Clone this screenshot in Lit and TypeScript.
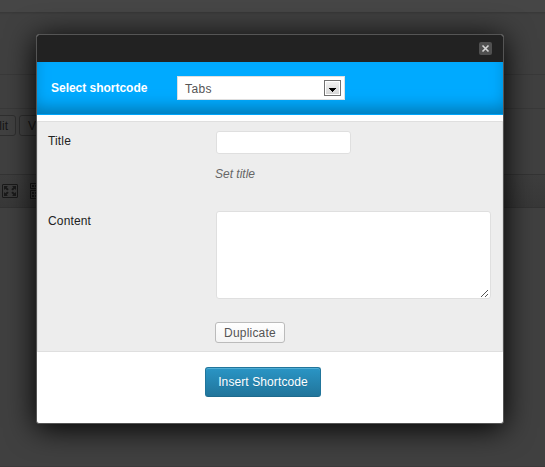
import { LitElement, html, css, svg } from "lit";
import { customElement } from "lit/decorators.js";

@customElement("editor-backdrop")
class EditorBackdrop extends LitElement {
  static styles = css`
    :host { display: flex; flex-direction: column; width: 545px; height: 467px; background: #404040; overflow: hidden; font: 12px "Liberation Sans", Arial, sans-serif; color: #151515; }
    div { box-sizing: border-box; flex: none; }
    .bar { height: 13px; background: #464646; border-bottom: 1px solid #393939; box-shadow: 0 1px 1px #3c3c3c; }
    .row1 { height: 62px; border-bottom: 1px solid #393939; }
    .row2 { height: 34px; border-bottom: 1px solid #393939; }
    .media { height: 66px; padding-top: 6px; display: flex; gap: 3px; border-bottom: 1px solid #343434; }
    .btn { height: 21px; line-height: 20px; border: 1px solid #2f2f2f; border-radius: 3px; background: #414141; white-space: nowrap; }
    .edit { width: 36px; margin-left: -20px; padding-right: 7px; text-align: right; }
    .visual { width: 60px; padding-left: 8px; }
    .tools { height: 33px; padding: 9px 0 0 2px; display: flex; gap: 12px; background: linear-gradient(#3e3e3e, #383838); border-bottom: 1px solid #333; }
    .canvas { height: 258px; }
    .foot { height: 1px; background: #3c393a; }
    svg { display: block; flex: none; }
    .kitchen { margin-top: -1px; }
  `;
  render() {
    const arrow = svg`<path d="M2 2h4L4.700 3.300 6.700 5.200 5.200 6.500 3.300 4.700 2 6z"/>`;
    return html`
      <div class="bar"></div>
      <div class="row1"></div>
      <div class="row2"></div>
      <div class="media"><div class="btn edit">lit</div><div class="btn visual">Visual</div></div>
      <div class="tools">
        <svg width="16" height="14" viewBox="0 0 16 14" fill="#1a1a1a">
          <rect x=".5" y=".5" width="15" height="13" rx=".5" fill="none" stroke="#1a1a1a"/>
          ${arrow}
          <g transform="matrix(-1 0 0 1 16 0)">${arrow}</g>
          <g transform="matrix(1 0 0 -1 0 14)">${arrow}</g>
          <g transform="matrix(-1 0 0 -1 16 14)">${arrow}</g>
        </svg>
        <svg class="kitchen" width="16" height="16" viewBox="0 0 16 16" fill="none" stroke="#171717">
          <path d="M.5 .5h15v5H.5zM.5 7.500h15v8H.5z"/>
          <path d="M2 3h2M5 3h2M8 3h2M2 10h2M5 10h2M8 10h2M2 13h2M5 13h2M8 13h2" stroke-width="2"/>
        </svg>
      </div>
      <div class="canvas"></div>
      <div class="foot"></div>
    `;
  }
}

@customElement("shortcode-dialog")
class ShortcodeDialog extends LitElement {
  static styles = css`
    :host { display: flex; flex-direction: column; box-sizing: border-box; width: 468px; height: 390px; border: 1px solid #555; border-radius: 3px; background: #fff; box-shadow: 0 4px 30px #000; overflow: hidden; font: 12px/18px "Liberation Sans", Arial, sans-serif; color: #222; }
    * { box-sizing: border-box; }
    .head { flex: none; height: 27px; background: #222; display: flex; justify-content: flex-end; padding: 7px 11px 0 0; }
    .close { display: block; width: 13px; height: 13px; }
    .pick { flex: none; height: 53px; background: #0af; box-shadow: inset 0 -10px 16px -4px #0078b4; border-bottom: 1px solid #00a4f8; display: flex; align-items: center; padding-left: 14px; }
    .label { width: 126px; color: #fff; font-weight: bold; letter-spacing: -.02px; white-space: nowrap; }
    .select { width: 168px; height: 24px; border: 1px solid #dfdfdf; background: #fff; display: flex; align-items: center; justify-content: space-between; padding: 1px 3px 0 7px; color: #555; letter-spacing: .4px; }
    .drop { width: 17px; height: 16px; border: 1px solid #707070; box-shadow: inset 0 0 0 1px #fff; background: linear-gradient(#f3f3f3, #d4d4d4); margin-top: -1px; }
    .drop svg { display: block; }
    .form { flex: none; height: 231px; margin-top: 6px; border: 1px solid #dfdfdf; background: #ededed; padding: 9px 0 0 10px; display: grid; grid-template-columns: 167px 1fr; grid-template-rows: 80px 1fr; }
    .name { line-height: 20px; letter-spacing: .15px; }
    .field { display: flex; flex-direction: column; align-items: flex-start; padding-left: 1px; }
    .input { width: 135px; height: 23px; border: 1px solid #dfdfdf; border-radius: 3px; background: #fff; }
    .hint { margin: 11px 0 0 -1px; font-style: italic; color: #666; }
    .area { width: 275px; height: 88px; border: 1px solid #dfdfdf; border-radius: 3px; background: #fff; display: flex; align-items: flex-end; justify-content: flex-end; padding: 0 1px 1px 0; }
    .dup { height: 21px; width: 70px; margin: 23px 0 0 -1px; line-height: 20px; text-align: center; border: 1px solid #bbb; border-radius: 3px; background: linear-gradient(#fefefe, #f4f4f4); color: #555; letter-spacing: .2px; }
    .insert { flex: none; margin: 15px 0 0 168px; width: 116px; height: 30px; line-height: 28px; text-align: center; color: #fff; border: 1px solid #21759b; border-bottom-color: #1e6a8d; border-radius: 3px; background: linear-gradient(#2a95c5, #21759b); box-shadow: inset 0 1px 0 rgba(120, 200, 230, .5); text-shadow: 0 1px 0 rgba(0, 0, 0, .1); letter-spacing: .1px; }
  `;
  render() {
    return html`
      <div class="head">
        <svg class="close" viewBox="0 0 13 13">
          <rect width="13" height="13" rx="2" fill="#505050"/>
          <path d="M3.500 3.500l6 6M9.500 3.500l-6 6" stroke="#d5d5d5" stroke-width="1.600"/>
        </svg>
      </div>
      <div class="pick">
        <div class="label">Select shortcode</div>
        <div class="select"><span>Tabs</span>
          <div class="drop"><svg width="15" height="14" viewBox="0 0 15 14" shape-rendering="crispEdges"><path d="M4 7h7v1h-1v1H9v1H8v1H7v-1H6V9H5V8H4z"/></svg></div>
        </div>
      </div>
      <div class="form">
        <div class="name">Title</div>
        <div class="field"><div class="input"></div><div class="hint">Set title</div></div>
        <div class="name">Content</div>
        <div class="field">
          <div class="area"><svg width="8" height="8" viewBox="0 0 8 8" shape-rendering="crispEdges" fill="#555">
            ${[0, 1, 2, 3, 4, 5, 6].map((i) => svg`<rect x=${i} y=${7 - i} width="1" height="1"/>`)}
            ${[4, 5, 6].map((i) => svg`<rect x=${i} y=${11 - i} width="1" height="1"/>`)}
          </svg></div>
          <div class="dup">Duplicate</div>
        </div>
      </div>
      <div class="insert">Insert Shortcode</div>
    `;
  }
}

@customElement("app-root")
class AppRoot extends LitElement {
  static styles = css`
    :host { display: block; position: relative; width: 545px; height: 467px; overflow: hidden; }
    .dialog { position: absolute; left: 36px; top: 34px; }
  `;
  render() {
    return html`<editor-backdrop></editor-backdrop><shortcode-dialog class="dialog"></shortcode-dialog>`;
  }
}
